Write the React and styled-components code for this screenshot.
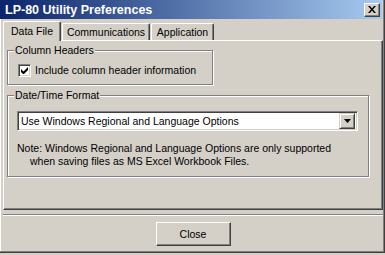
import React from "react";
import styled, { createGlobalStyle } from "styled-components";

const GlobalStyle = createGlobalStyle`
  html, body {
    margin: 0;
    padding: 0;
    background: #d4d0c8;
  }
  body {
    font-family: "Liberation Sans", Arial, sans-serif;
    font-size: 10.5px;
    color: #000;
  }
`;

const Window = styled.div`
  box-sizing: border-box;
  width: 385px;
  height: 253px;
  display: flex;
  flex-direction: column;
  background: #d4d0c8;
  border-right: 1px solid #404040;
  border-bottom: 1px solid #404040;
  box-shadow: inset -1px -1px 0 #808080, inset 1px 0 0 #ffffff;
`;

const TitleBar = styled.div`
  box-sizing: border-box;
  height: 19px;
  margin-right: 2px;
  display: flex;
  align-items: center;
  justify-content: space-between;
  padding: 0 2px 0 5px;
  background: linear-gradient(to right, #0a246a, #a6caf0);
  color: #fff;
  font-weight: bold;
  font-size: 12.5px;
`;

const TitleButton = styled.div`
  box-sizing: border-box;
  width: 16px;
  height: 14px;
  display: flex;
  align-items: center;
  justify-content: center;
  background: #d4d0c8;
  border-top: 1px solid #fff;
  border-left: 1px solid #fff;
  border-right: 1px solid #404040;
  border-bottom: 1px solid #404040;
  box-shadow: inset -1px -1px 0 #808080;
`;

const Body = styled.div`
  flex: 1;
  display: flex;
  flex-direction: column;
  padding: 2px 1px 0 3px;
`;

const TabRow = styled.div`
  display: flex;
  align-items: flex-end;
  height: 19px;
  position: relative;
  z-index: 1;
`;

const Tab = styled.div`
  box-sizing: border-box;
  width: ${(p) => p.$width}px;
  height: ${(p) => (p.$active ? 20 : 17)}px;
  margin-bottom: ${(p) => (p.$active ? -1 : 0)}px;
  margin-left: ${(p) => p.$offset || 0}px;
  display: flex;
  align-items: center;
  justify-content: center;
  padding-bottom: ${(p) => (p.$active ? 1 : 0)}px;
  background: #d4d0c8;
  border-top: 1px solid #fff;
  border-left: 1px solid #fff;
  border-right: 1px solid #404040;
  border-radius: 2px 2px 0 0;
  box-shadow: inset -1px 0 0 #808080;
  white-space: nowrap;
`;

const Panel = styled.div`
  box-sizing: border-box;
  height: 170px;
  padding: 0 3px 0 3px;
  border-top: 1px solid #fff;
  border-left: 1px solid #fff;
  border-right: 1px solid #404040;
  border-bottom: 1px solid #404040;
  box-shadow: inset -1px -1px 0 #808080;
  display: flex;
  flex-direction: column;
  align-items: flex-start;
`;

const Group = styled.div`
  box-sizing: border-box;
  position: relative;
  width: ${(p) => p.$width}px;
  height: ${(p) => p.$height}px;
  margin-top: ${(p) => p.$top}px;
  padding: ${(p) => p.$pad};
  border: 1px solid #808080;
  box-shadow: 1px 1px 0 #fff, inset 1px 1px 0 #fff;
`;

const GroupLabel = styled.span`
  position: absolute;
  top: -7px;
  left: 6px;
  padding: 0 1px;
  line-height: 13px;
  background: #d4d0c8;
  white-space: nowrap;
`;

const CheckRow = styled.label`
  display: flex;
  align-items: center;
  gap: 4px;
  line-height: 13px;
`;

const CheckBox = styled.span`
  box-sizing: border-box;
  width: 13px;
  height: 13px;
  display: flex;
  align-items: center;
  justify-content: center;
  background: #fff;
  border-top: 1px solid #808080;
  border-left: 1px solid #808080;
  border-right: 1px solid #fff;
  border-bottom: 1px solid #fff;
  box-shadow: inset 1px 1px 0 #404040, inset -1px -1px 0 #d4d0c8;
`;

const Select = styled.div`
  box-sizing: border-box;
  width: 341px;
  height: 20px;
  display: flex;
  align-items: center;
  justify-content: space-between;
  padding: 0 2px 0 3px;
  background: #fff;
  border-top: 1px solid #808080;
  border-left: 1px solid #808080;
  border-right: 1px solid #fff;
  border-bottom: 1px solid #fff;
  box-shadow: inset 1px 1px 0 #404040, inset -1px -1px 0 #d4d0c8;
`;

const DropButton = styled.div`
  box-sizing: border-box;
  width: 16px;
  height: 16px;
  display: flex;
  align-items: center;
  justify-content: center;
  background: #d4d0c8;
  border-top: 1px solid #d4d0c8;
  border-left: 1px solid #d4d0c8;
  border-right: 1px solid #404040;
  border-bottom: 1px solid #404040;
  box-shadow: inset 1px 1px 0 #fff, inset -1px -1px 0 #808080;
`;

const Note = styled.div`
  margin-top: 11px;
  padding-left: 13px;
  text-indent: -13px;
  line-height: 13px;
  width: 320px;
`;

const Separator = styled.div`
  margin-top: 4px;
  height: 0;
  border-top: 1px solid #808080;
  border-bottom: 1px solid #fff;
`;

const Footer = styled.div`
  display: flex;
  justify-content: center;
  padding-top: 6px;
`;

const Button = styled.button`
  box-sizing: border-box;
  width: 75px;
  height: 24px;
  font: inherit;
  color: #000;
  background: #d4d0c8;
  border-top: 1px solid #fff;
  border-left: 1px solid #fff;
  border-right: 1px solid #404040;
  border-bottom: 1px solid #404040;
  box-shadow: inset -1px -1px 0 #808080;
  padding: 0;
`;

export default function App() {
  return (
    <>
      <GlobalStyle />
      <Window>
        <TitleBar>
          <span>LP-80 Utility Preferences</span>
          <TitleButton>
            <svg width="8" height="7" viewBox="0 0 8 7">
              <path d="M0 0h2l2 2.5L6 0h2L5 3.5 8 7H6L4 4.5 2 7H0l3-3.5z" fill="#000" />
            </svg>
          </TitleButton>
        </TitleBar>
        <Body>
          <TabRow>
            <Tab $active $width={58}>Data File</Tab>
            <Tab $width={88} $offset={1}>Communications</Tab>
            <Tab $width={63} $offset={1}>Application</Tab>
          </TabRow>
          <Panel>
            <Group $width={206} $height={35} $top={9} $pad="13px 0 0 10px">
              <GroupLabel>Column Headers</GroupLabel>
              <CheckRow>
                <CheckBox>
                  <svg width="7" height="7" viewBox="0 0 7 7">
                    <path d="M0 2v3l2 2h1l4-4V0L2.5 4.5z" fill="#000" />
                  </svg>
                </CheckBox>
                Include column header information
              </CheckRow>
            </Group>
            <Group $width={362} $height={82} $top={10} $pad="15px 0 0 9px">
              <GroupLabel>Date/Time Format</GroupLabel>
              <Select>
                <span>Use Windows Regional and Language Options</span>
                <DropButton>
                  <svg width="7" height="4" viewBox="0 0 7 4">
                    <path d="M0 0h7L3.5 4z" fill="#000" />
                  </svg>
                </DropButton>
              </Select>
              <Note>
                Note: Windows Regional and Language Options are only supported
                when saving files as MS Excel Workbook Files.
              </Note>
            </Group>
          </Panel>
          <Separator />
          <Footer>
            <Button>Close</Button>
          </Footer>
        </Body>
      </Window>
    </>
  );
}
